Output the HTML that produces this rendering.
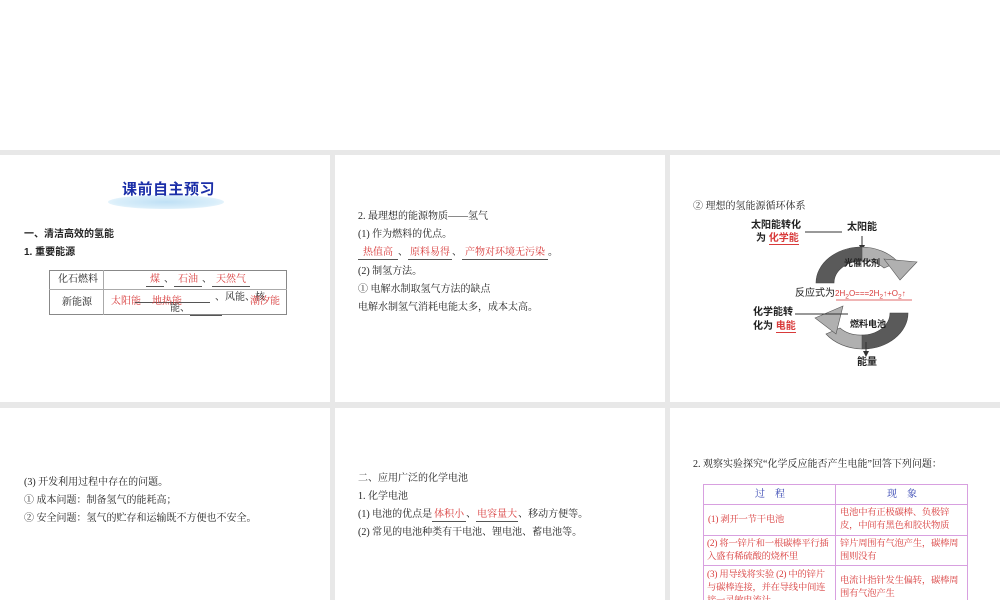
<!DOCTYPE html>
<html style="overflow:hidden;height:600px"><head><meta charset="utf-8">
<style>
*{margin:0;padding:0;box-sizing:border-box}
body{width:1000px;height:600px;background:#fff;position:relative;overflow:hidden;font-family:"Liberation Serif","Noto Serif CJK SC","Noto Sans CJK SC",serif;color:#222;font-size:10px}
.g{position:absolute;background:#e8e8e8}
.t{position:absolute;white-space:nowrap;line-height:12px}
.b{font-weight:bold;font-family:"Liberation Sans","Noto Sans CJK SC",sans-serif}
.r{color:#d83a3a}
.u{display:inline-block;border-bottom:1px solid #555;text-align:center}
.s{font-family:"Liberation Sans","Noto Sans CJK SC",sans-serif;font-weight:bold;font-size:10px}
.tb{font-size:9.3px;letter-spacing:-0.2px}
</style></head><body>
<div class="g" style="left:0;top:150px;width:1000px;height:5px"></div>
<div class="g" style="left:0;top:402px;width:1000px;height:6px"></div>
<div class="g" style="left:330px;top:150px;width:5px;height:450px"></div>
<div class="g" style="left:665px;top:150px;width:5px;height:450px"></div>

<!-- panel 1 -->
<div style="position:absolute;left:108px;top:195px;width:116px;height:14px;border-radius:50%;background:radial-gradient(ellipse at center,#bfe0f5 0%,#d9eefa 60%,rgba(255,255,255,0) 100%)"></div>
<div class="t b" style="left:122px;top:181px;font-size:15px;line-height:18px;color:#1c2fa8;letter-spacing:0.5px">课前自主预习</div>
<div class="t b" style="left:24px;top:229px">一、清洁高效的氢能</div>
<div class="t b" style="left:24px;top:247px">1. 重要能源</div>
<div style="position:absolute;left:49px;top:270px;width:238px;height:45px;border:1px solid #888"></div>
<div style="position:absolute;left:103px;top:270px;width:1px;height:45px;background:#aaa"></div>
<div style="position:absolute;left:49px;top:289px;width:238px;height:1px;background:#aaa"></div>
<div class="t" style="left:58px;top:274px">化石燃料</div>
<div class="t" style="left:62px;top:297px">新能源</div>
<div class="t" style="left:146px;top:274px"><span class="u r" style="width:18px">煤</span>、<span class="u r" style="width:28px">石油</span>、<span class="u r" style="width:38px">天然气</span></div>
<div class="t r" style="left:111px;top:296px">太阳能</div>
<div style="position:absolute;left:135px;top:302px;width:75px;height:1px;background:#555"></div>
<div class="t r" style="left:152px;top:296px">地热能</div>
<div class="t" style="left:215px;top:292px">、风能、核</div>
<div class="t" style="left:170px;top:303px">能、<span class="u" style="width:32px">&nbsp;</span></div>
<div class="t r" style="left:250px;top:296px">潮汐能</div>

<!-- panel 2 -->
<div class="t" style="left:358px;top:211px">2. 最理想的能源物质——氢气</div>
<div class="t" style="left:358px;top:229px">(1) 作为燃料的优点。</div>
<div class="t" style="left:358px;top:247px"><span class="u r" style="width:40px">热值高</span>、<span class="u r" style="width:44px">原料易得</span>、<span class="u r" style="width:86px">产物对环境无污染</span>。</div>
<div class="t" style="left:358px;top:266px">(2) 制氢方法。</div>
<div class="t" style="left:358px;top:284px">① 电解水制取氢气方法的缺点</div>
<div class="t" style="left:358px;top:302px">电解水制氢气消耗电能太多，成本太高。</div>

<!-- panel 3 -->
<div class="t" style="left:693px;top:201px">② 理想的氢能源循环体系</div>
<svg style="position:absolute;left:0;top:0" width="1000" height="600">
<line x1="805" y1="232" x2="842" y2="232" stroke="#333" stroke-width="1"/>
<line x1="862" y1="236" x2="862" y2="249" stroke="#333"/>
<path d="M859,245 L862,251 L865,245Z" fill="#333"/>
<path d="M816,283 A46,36 0 0 1 862,247 L862,261 A28,22 0 0 0 834,283 Z" fill="#5a5a5a" stroke="#444" stroke-width="0.6"/>
<path d="M862,247 A46,36 0 0 1 898,262 L884,268 A28,22 0 0 0 862,261 Z" fill="#b0b0b0" stroke="#555" stroke-width="0.6"/>
<path d="M884,259 L917,262 L900,280 Z" fill="#b0b0b0" stroke="#555" stroke-width="0.6"/>
<path d="M908,313 A46,36 0 0 1 862,349 L862,335 A28,22 0 0 0 890,313 Z" fill="#5a5a5a" stroke="#444" stroke-width="0.6"/>
<path d="M862,349 A46,36 0 0 1 826,334 L840,328 A28,22 0 0 0 862,335 Z" fill="#b0b0b0" stroke="#555" stroke-width="0.6"/>
<path d="M815,318 L843,306 L836,334 Z" fill="#b0b0b0" stroke="#555" stroke-width="0.6"/>
<line x1="795" y1="314" x2="848" y2="314" stroke="#333"/>
<line x1="866" y1="342" x2="866" y2="354" stroke="#333"/>
<path d="M863,351 L866,357 L869,351Z" fill="#333"/>
<line x1="836" y1="300" x2="912" y2="300" stroke="#d83a3a" stroke-width="0.8"/>
</svg>
<div class="t s" style="left:751px;top:220px">太阳能转化</div>
<div class="t s" style="left:756px;top:233px">为 <span class="r" style="border-bottom:1px solid #d83a3a">化学能</span></div>
<div class="t s" style="left:847px;top:222px">太阳能</div>
<div class="t s" style="left:844px;top:257px;font-size:9px">光催化剂</div>
<div class="t s" style="left:795px;top:288px;font-weight:normal">反应式为<span class="r" style="font-size:8px">2H<sub>2</sub>O===2H<sub>2</sub>↑+O<sub>2</sub>↑</span></div>
<div class="t s" style="left:753px;top:307px">化学能转</div>
<div class="t s" style="left:753px;top:321px">化为 <span class="r" style="border-bottom:1px solid #d83a3a">电能</span></div>
<div class="t s" style="left:850px;top:318px;font-size:9px">燃料电池</div>
<div class="t s" style="left:857px;top:357px">能量</div>

<!-- row 2 panel 1 -->
<div class="t" style="left:24px;top:477px">(3) 开发利用过程中存在的问题。</div>
<div class="t" style="left:24px;top:495px">① 成本问题：制备氢气的能耗高；</div>
<div class="t" style="left:24px;top:513px">② 安全问题：氢气的贮存和运输既不方便也不安全。</div>

<!-- row 2 panel 2 -->
<div class="t" style="left:358px;top:473px">二、应用广泛的化学电池</div>
<div class="t" style="left:358px;top:491px">1. 化学电池</div>
<div class="t" style="left:358px;top:509px">(1) 电池的优点是<span class="u r" style="width:34px">体积小</span>、<span class="u r" style="width:42px">电容量大</span>、移动方便等。</div>
<div class="t" style="left:358px;top:527px">(2) 常见的电池种类有干电池、锂电池、蓄电池等。</div>

<!-- row 2 panel 3 -->
<div class="t" style="left:693px;top:459px">2. 观察实验探究“化学反应能否产生电能”回答下列问题：</div>
<div style="position:absolute;left:703px;top:484px;width:265px;height:116px;border:1px solid #d8a0e0;border-bottom:none"></div>
<div style="position:absolute;left:835px;top:484px;width:1px;height:116px;background:#d8a0e0"></div>
<div style="position:absolute;left:703px;top:504px;width:265px;height:1px;background:#d8a0e0"></div>
<div style="position:absolute;left:703px;top:535px;width:265px;height:1px;background:#d8a0e0"></div>
<div style="position:absolute;left:703px;top:565px;width:265px;height:1px;background:#d8a0e0"></div>
<div class="t" style="left:755px;top:489px;color:#3040b0">过　程</div>
<div class="t" style="left:887px;top:489px;color:#3040b0">现　象</div>
<div class="t r tb" style="left:708px;top:514px">(1) 剥开一节干电池</div>
<div class="t r tb" style="left:840px;top:507px;line-height:13px">电池中有正极碳棒、负极锌<br>皮，中间有黑色和胶状物质</div>
<div class="t r tb" style="left:707px;top:538px;line-height:13px">(2) 将一锌片和一根碳棒平行插<br>入盛有稀硫酸的烧杯里</div>
<div class="t r tb" style="left:840px;top:538px;line-height:13px">锌片周围有气泡产生，碳棒周<br>围则没有</div>
<div class="t r tb" style="left:707px;top:569px;line-height:13px">(3) 用导线将实验 (2) 中的锌片<br>与碳棒连接，并在导线中间连<br>接一灵敏电流计</div>
<div class="t r tb" style="left:840px;top:575px;line-height:13px">电流计指针发生偏转，碳棒周<br>围有气泡产生</div>
</body></html>
